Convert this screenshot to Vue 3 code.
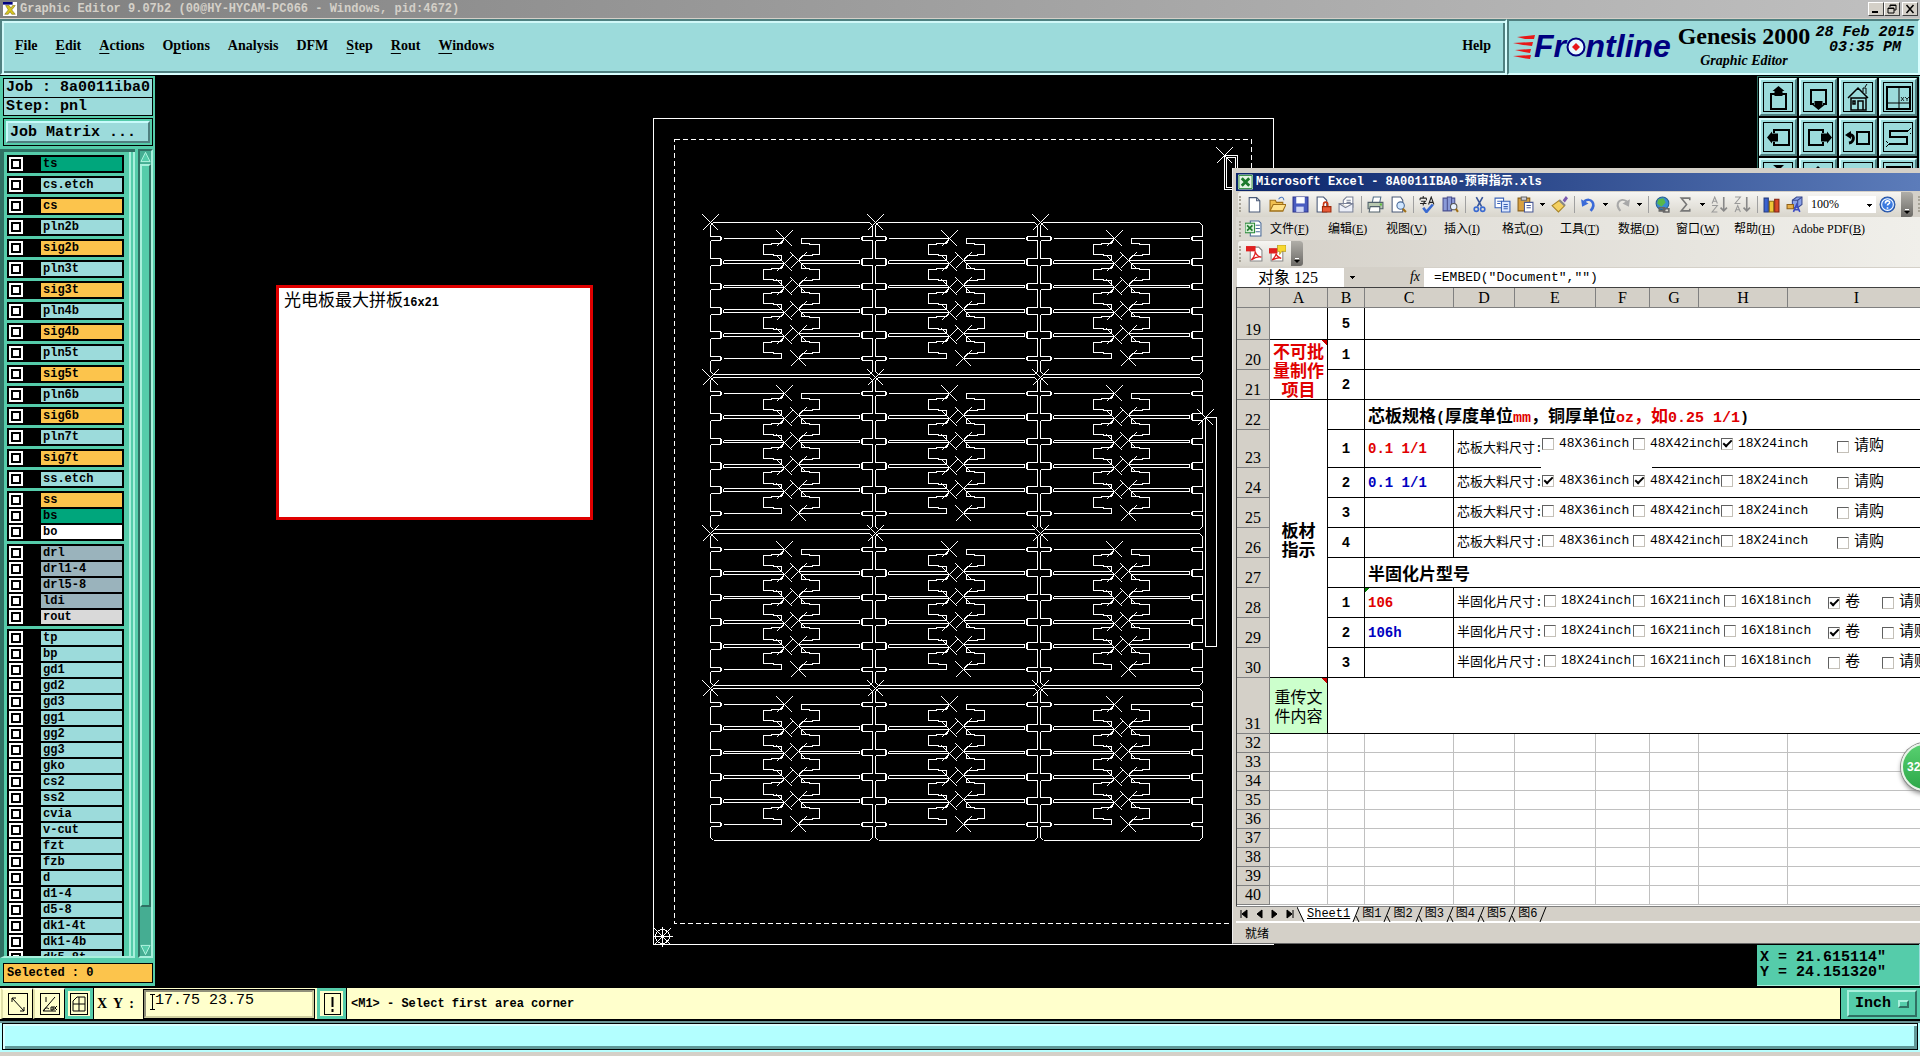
<script setup>
import { ref } from 'vue'

const menus = [
  ['', 'F', 'ile'], ['', 'E', 'dit'], ['', 'A', 'ctions'], ['O', 'p', 'tions'], ['Analysis', '', ''],
  ['DFM', '', ''], ['', 'S', 'tep'], ['', 'R', 'out'], ['', 'W', 'indows'],
]

const single = [
  ['ts', 'green'], ['cs.etch', 'aqua'], ['cs', 'gold'], ['pln2b', 'aqua'], ['sig2b', 'gold'], ['pln3t', 'aqua'],
  ['sig3t', 'gold'], ['pln4b', 'aqua'], ['sig4b', 'gold'], ['pln5t', 'aqua'], ['sig5t', 'gold'], ['pln6b', 'aqua'],
  ['sig6b', 'gold'], ['pln7t', 'aqua'], ['sig7t', 'gold'], ['ss.etch', 'aqua'],
]
const layerGroups = [
  ...single.map((l) => [l]),
  [['ss', 'gold'], ['bs', 'green'], ['bo', 'white']],
  [['drl', 'slate'], ['drl1-4', 'slate'], ['drl5-8', 'slate'], ['ldi', 'slate'], ['rout', 'silver']],
  ['tp', 'bp', 'gd1', 'gd2', 'gd3', 'gg1', 'gg2', 'gg3', 'gko', 'cs2', 'ss2', 'cvia', 'v-cut', 'fzt', 'fzb', 'd',
    'd1-4', 'd5-8', 'dk1-4t', 'dk1-4b', 'dk5-8t'].map((n) => [n, 'aqua']),
]

const toolButtons = [
  { name: 'Pan up', art: '<path d="M14 15H10V30H25V15H21" stroke-width="2"/><path fill="currentColor" stroke="none" d="M17.500 7l6 5h-2v5h-8v-5h-2z"/>' },
  { name: 'Pan down', art: '<path d="M13 25H10V11H25V25H22" stroke-width="2"/><path fill="currentColor" stroke="none" d="M17.500 31l6-5h-2v-4h-8v4h-2z"/>' },
  { name: 'Home', art: '<path d="M7 19L17 9l10 10M10 19h15v12H10zM17 31v-9h5v9M12 22h2v3h-2z" stroke-width="1.500"/><path d="M22 13V9h3v6M24 8l2-3"/>' },
  { name: 'Window XY', art: '<rect x="6" y="8" width="23" height="22" stroke-width="2"/><path d="M18 8v22M6 24h23"/><path d="M20 18l3 4M23 18l-3 4M24 18l2 2 2-2M26 20v2" stroke-width=".8"/>' },
  { name: 'Pan left', art: '<path d="M13 14v-3h15v15H13v-3" stroke-width="2"/><path fill="currentColor" stroke="none" d="M6 18.500l5-6v2h6v8h-6v2z"/>' },
  { name: 'Pan right', art: '<path d="M22 14v-3H8v15h14v-3" stroke-width="2"/><path fill="currentColor" stroke="none" d="M31 18.500l-5-6v2h-6v8h6v2z"/>' },
  { name: 'Previous', art: '<rect x="16" y="13" width="12" height="12" stroke-width="2"/><path d="M7 16c7-2 7 7 1 8" stroke-width="3"/><path fill="currentColor" stroke="none" d="M4 16l6-4v8z"/>' },
  { name: 'Snake', art: '<path d="M27 12H9v6h17v7H8" stroke-width="2"/><path d="M27 12l3-3M30 15l-1-1M8 25l-3 3M5 22l2 2"/>' },
  { name: 'Zoom in', art: '<path fill="currentColor" stroke="none" d="M12 6h11l-5 5z"/>' },
  { name: 'Zoom out', art: '<path fill="currentColor" stroke="none" d="M17 7l4 4h-8z"/>' },
  { name: 'Window', art: '' },
  { name: 'Frame', art: '<rect x="6" y="8" width="23" height="22" stroke-width="2"/>' },
]

// Panel drawing: one board outline, repeated on a 3 x 4 array
const notches = [[14, 18], [36, 43], [61, 67], [85, 92], [109, 116], [134, 138]]
const strips = [[16, 38, 22, 32], [41, 63, 47, 57], [65, 87, 71, 81], [90, 111, 95, 106], [114, 136, 120, 130]]
function side(x0, s) {
  const x = (n) => x0 + s * n
  let d = `M${x(3)} 0L${x(0)} 3`
  notches.forEach(([a, b]) => {
    d += `V${a}H${x(10)}V${b}H${x(0)}`
    d += `M${x(10)} ${a + 1}H${x(11)}V${b - 1}M${x(13)} ${a + 2}V${b - 2}M${x(0)} ${b}`
  })
  return d + `V149L${x(3)} 152`
}
let board = side(0, 1) + side(162, -1) + 'M3 0H159M3 152H159'
strips.forEach(([t, b, u, v]) => {
  board += `M13 ${t}H74L71 ${u - 1}L61 ${u - 1}V${u}H53V${v}H63V${v + 1}H71V${b}H13`
  board += `M149 ${t}H91V${u - 1}H99V${u}H109V${v}H102V${v + 1}H92L88 ${b}H149`
  board += `M66 ${t - 8}l16 16m0 -16l-16 16M80 ${b - 8}l16 16m0 -16l-16 16`
})
board += 'M-8 -8l16 16m0 -16l-16 16'
const origins = []
for (const y of [104, 259, 415, 570]) for (const x of [57, 222, 387]) origins.push([x, y])

const S = 'sep'
const D = 'drop'
const xlIcons = [
  ['New', '<path fill="#fff" stroke="#4a5a78" d="M3 1.500h7l3 3V15H3z"/><path fill="none" stroke="#4a5a78" d="M10 1.500v3h3"/>'],
  ['Open', '<path fill="#f0c050" stroke="#a07018" d="M1 4h5l1 2h6v8H1z"/><path fill="#ffe28a" stroke="#a07018" d="M1 14l3-6h12l-3 6z"/><path fill="none" stroke="#4a78c0" d="M9 3c2-3 5-2 5 1"/>'],
  ['Save', '<path fill="#4a5cc0" stroke="#28308a" d="M1 1h14v14H1z"/><path fill="#fff" d="M4 1h8v6H4z"/><path fill="#cfd6f4" d="M4 10h7v5H4z"/>'],
  ['Permission', '<path fill="#fff" stroke="#4a5a78" d="M2 1h6l3 3v11H2z"/><path fill="none" stroke="#c83818" stroke-width="1.500" d="M8 10V8c0-3 4-3 4 0v2"/><path fill="#e85a38" stroke="#a02808" d="M7 10h8v5H7z"/>'],
  ['Mail', '<path fill="#fff" stroke="#7a8298" d="M5 8V4l3-3h6v10"/><path fill="#eceff8" stroke="#7a8298" d="M1 7h13v8H1zM1 7l6 4 7-4"/><path stroke="#7a8298" d="M8 4h4M8 6h4"/>'],
  S,
  ['Print', '<path fill="#fff" stroke="#55708a" d="M5 6l1-5h7l-1 5"/><path fill="#b8c8b0" stroke="#50606a" d="M1 6h14v6H1z"/><path fill="#fff" stroke="#50606a" d="M3 10h9v5H2z"/><path fill="#5cba3c" d="M12 7h2v2h-2z"/>'],
  ['Preview', '<path fill="#fff" stroke="#4a5a78" d="M2 1h8l2 3v11H2z"/><circle cx="10" cy="9" r="3.500" fill="#cfe6ff" stroke="#4a6a98"/><path stroke="#a07018" stroke-width="2" d="M12 12l3 3"/>'],
  S,
  ['Spelling', '<path fill="none" stroke="#222" d="M1 2h6M4 0v2M1 2v2M7 2v2M2 5h4l-2 2v2M1 7h6M9 8l2.500-7L14 8M10 6h3"/><path fill="none" stroke="#3a6ad0" stroke-width="2.500" d="M4 11l3 4 6-7"/>'],
  ['Research', '<path fill="#8a9ad8" stroke="#4a5090" d="M1 2h4v12H1zM5 1h4v13H5zM9 2h3v10H9z"/><circle cx="11" cy="10" r="3" fill="#e6f0ff" stroke="#555"/><path stroke="#a07018" stroke-width="2" d="M13 12l2 3"/>'],
  S,
  ['Cut', '<path fill="none" stroke="#38569a" stroke-width="1.500" d="M5 1l5 9M11 1L6 10"/><circle cx="5" cy="12.500" r="2" fill="none" stroke="#3a6ad0" stroke-width="1.500"/><circle cx="11" cy="12.500" r="2" fill="none" stroke="#3a6ad0" stroke-width="1.500"/>'],
  ['Copy', '<path fill="#fff" stroke="#3a62b8" d="M1 2h8v9H1z"/><path fill="#dce8ff" stroke="#3a62b8" d="M7 5h8v10H7z"/><path stroke="#3a62b8" d="M3 5h4M3 7h3M9 8h4M9 10h4M9 12h4"/>'],
  ['Paste', '<path fill="#d8a040" stroke="#8a6018" d="M1 2h11v12H1z"/><path fill="#d0d0d8" stroke="#666" d="M4 1h5v3H4z"/><path fill="#fff" stroke="#4a5a98" d="M7 6h8v9H7z"/><path stroke="#4a5a98" d="M9 9h4M9 11h4"/>'],
  D,
  ['Format painter', '<path fill="#7a5ab0" d="M11 4l3-4 2 2-3 4z"/><path fill="#f4d060" stroke="#a88428" d="M1 9l7-5 5 5-6 6z"/><path stroke="#888" stroke-width="2" d="M8 4l5 5"/>'],
  S,
  ['Undo', '<path fill="none" stroke="#3a6ad8" stroke-width="2.500" d="M4 5c6-4 12 2 6 9"/><path fill="#3a6ad8" d="M1 3l1 7 6-3z"/>'],
  D,
  ['Redo', '<path fill="none" stroke="#a8a8a8" stroke-width="2" d="M12 5C6 1 0 7 6 14"/><path fill="#a8a8a8" d="M15 3l-1 7-6-3z"/>'],
  D,
  S,
  ['Hyperlink', '<circle cx="8" cy="7" r="6" fill="#3a8ad0" stroke="#286090"/><path fill="#58b84a" d="M4 3l5-1 2 4-4 4-4-3z"/><path fill="none" stroke="#666" stroke-width="1.500" d="M5 11h5v3H5zM9 12h5v3H9z"/>'],
  ['AutoSum', '<path fill="none" stroke="#777" stroke-width="1.500" d="M12 4V2H4l5 6-5 6h8v-2"/>'],
  D,
  ['Sort ascending', '<path fill="none" stroke="#999" d="M1 7l2.500-6L6 7M2 5h3M1 9h5l-5 6h5"/><path fill="none" stroke="#888" stroke-width="1.500" d="M12 1v13M9 11l3 3 3-3"/>'],
  ['Sort descending', '<path fill="none" stroke="#999" d="M1 1h5L1 7h5M1 15l2.500-6L6 15M2 13h3"/><path fill="none" stroke="#888" stroke-width="1.500" d="M12 1v13M9 11l3 3 3-3"/>'],
  S,
  ['Chart', '<path fill="#3a62d0" stroke="#223a80" d="M1 2h4v13H1z"/><path fill="#f0c838" stroke="#907010" d="M6 5h4v10H6z"/><path fill="#d84a28" stroke="#802010" d="M11 3h4v12h-4z"/>'],
  ['Drawing', '<path fill="#8aa2e8" stroke="#3a4a90" d="M6 4l4-3h5v7l-4 3H6z"/><path fill="none" stroke="#3a4a90" d="M6 4h5v7M11 4l4-3"/><path fill="#e8b04a" stroke="#906018" d="M1 8h6v4H1z"/><path fill="none" stroke="#3a4ac0" stroke-width="1.500" d="M7 15l3-7 3 7M8 13h4"/>'],
]

const xlMenus = [['文件', 'F'], ['编辑', 'E'], ['视图', 'V'], ['插入', 'I'], ['格式', 'O'], ['工具', 'T'], ['数据', 'D'], ['窗口', 'W'], ['帮助', 'H'], ['Adobe PDF', 'B']]
const columns = [['A', 58], ['B', 37], ['C', 89], ['D', 61], ['E', 81], ['F', 54], ['G', 49], ['H', 89], ['I', 138]]

const core = ['48X36inch', '48X42inch', '18X24inch', '请购']
const prepreg = ['18X24inch', '16X21inch', '16X18inch', '卷', '请购']
const coreRows = [
  { n: 23, i: 1, v: '0.1 1/1', c: 'red', on: [2] },
  { n: 24, i: 2, v: '0.1 1/1', c: 'blue', on: [0, 1] },
  { n: 25, i: 3, v: '', c: '', on: [] },
  { n: 26, i: 4, v: '', c: '', on: [] },
]
const prepregRows = [
  { n: 28, i: 1, v: '106', c: 'red', on: [3] },
  { n: 29, i: 2, v: '106h', c: 'blue', on: [3] },
  { n: 30, i: 3, v: '', c: '', on: [] },
]
const emptyRows = [32, 33, 34, 35, 36, 37, 38, 39, 40]
const sheets = ['图1', '图2', '图3', '图4', '图5', '图6']
const coords = ref('17.75 23.75')
</script>

<template>
  <div class="app">
    <header class="titlebar">
      <svg class="app-icon" viewBox="0 0 16 16"><rect width="16" height="16" fill="#fff" /><rect width="11" height="3" fill="#000080" /><path d="M3 4h4l2 3 2-3h3l-4 5 4 5h-4l-2-3-2 3H2l4-5z" fill="#d8c820" stroke="#705c10" stroke-width=".6" /></svg>
      <span class="title-text">Graphic Editor 9.07b2 (00@HY-HYCAM-PC066 - Windows, pid:4672)</span>
      <button class="win-btn" aria-label="Minimize"><svg viewBox="0 0 12 10"><path d="M2 8h6" stroke="#000" stroke-width="2" /></svg></button>
      <button class="win-btn" aria-label="Restore"><svg viewBox="0 0 12 10"><path d="M4 3V1h6v5H8M4 1.500h6M2 4h6v5H2zM2 4.500h6" fill="none" stroke="#000" /></svg></button>
      <button class="win-btn last" aria-label="Close"><svg viewBox="0 0 12 10"><path d="M2.500 1l7 8m0-8l-7 8" stroke="#000" stroke-width="1.500" /></svg></button>
    </header>

    <div class="top">
      <nav class="menubar">
        <button v-for="m in menus" :key="m.join('')">{{ m[0] }}<u>{{ m[1] }}</u>{{ m[2] }}</button>
        <button class="help">Help</button>
      </nav>
      <div class="brand">
        <div class="logo">
          <svg class="streaks" viewBox="0 0 22 24"><path fill="#e81818" d="M4 2l18-2-1 4H12zM0 8l20-1-1 4-9-1zM2 15l16-1-1 4-6-1zM0 21l18-1-1 4-7-1z" /></svg>
          <span class="wordmark">Fr<span class="ring">o<svg viewBox="0 0 20 20"><circle cx="10" cy="10" r="8.500" fill="#e8fbff" stroke="#000080" stroke-width="2" /><path d="M10 6l4 4-4 4-4-4z" fill="#e81818" /></svg></span>ntline</span>
        </div>
        <div class="product"><strong>Genesis 2000</strong><em>Graphic Editor</em></div>
        <div class="clock">28 Feb 2015<br>03:35 PM</div>
      </div>
    </div>

    <main class="work">
      <aside class="side">
        <div class="job"><div>Job : 8a0011iba0</div><div>Step: pnl</div></div>
        <div class="matrix"><button>Job Matrix ...</button></div>
        <div class="scroll">
          <div class="list">
            <div v-for="(g, gi) in layerGroups" :key="gi" class="group">
              <label v-for="l in g" :key="l[0]" class="layer"><input type="checkbox"><span :class="l[1]">{{ l[0] }}</span></label>
            </div>
          </div>
          <div class="bar">
            <svg viewBox="0 0 12 12"><path d="M6 1l5 10H1z" fill="#55ccaa" stroke="#b8f8e4" /></svg>
            <div class="thumb"></div>
            <svg viewBox="0 0 12 12"><path d="M1 1h10L6 11z" fill="#55ccaa" stroke="#b8f8e4" /></svg>
          </div>
        </div>
        <div class="selected">Selected : 0</div>
      </aside>

      <section class="canvas">
        <svg class="panel" width="630" height="840" viewBox="0 0 630 840" fill="none" stroke="#fff" shape-rendering="crispEdges">
          <g transform="translate(.5 .5)">
            <rect x="0" y="0" width="620" height="826" />
            <rect x="21" y="21" width="577" height="784" stroke-dasharray="5 3" />
            <path v-for="(o, i) in origins" :key="i" :d="board" :transform="`translate(${o[0]} ${o[1]})`" />
            <path d="M552 299h11v229h-11zM544 291l16 16m0-16l-16 16" />
            <path d="M571 37h13v34h-13zM573 39h9v30h-9zM563 29l16 16m0-16l-16 16" />
            <g><circle cx="9" cy="818" r="7" /><path d="M-1 818h20M9 808v20M1 810l16 16m0-16l-16 16" /><circle cx="9" cy="818" r="1" /></g>
          </g>
        </svg>
        <div class="note">光电板最大拼板<span>16x21</span></div>
      </section>

      <aside class="right">
        <div class="tools">
          <button v-for="t in toolButtons" :key="t.name" :aria-label="t.name"><svg viewBox="0 1 34 34" fill="none" stroke="currentColor"><rect x="2.500" y="3.500" width="29" height="29" /><g v-html="t.art" /></svg></button>
        </div>
        <div class="xy">X = 21.615114"<br>Y = 24.151320"</div>
      </aside>
    </main>

    <footer class="command">
      <button class="cmd" aria-label="Diagonal"><svg viewBox="0 0 22 24"><rect x="1.500" y="1.500" width="19" height="21" /><path d="M5 6l12 13M5 10V6h4M17 15v4h-4" /></svg></button>
      <button class="cmd" aria-label="Angle"><svg viewBox="0 0 22 24"><rect x="1.500" y="1.500" width="19" height="21" /><path d="M4 19L16 5M4 19h13M7 5v5M5 19c0-3 3-4 5-2M12 15h2v3h-2zM15 14v4m3-4l-2 2 2 2" /></svg></button>
      <button class="cmd on" aria-label="Grid"><svg viewBox="0 0 22 24"><rect x="2.500" y="1.500" width="17" height="21" /><path d="M5 9l4-4h8v14H5zM11 5v14M5 12h12" /></svg></button>
      <label class="xylabel" for="coords">X Y :</label>
      <div class="field"><svg viewBox="0 0 5 16"><path d="M0 .5h5M2.500 0v16M0 15.500h5" stroke="#000" /></svg><input id="coords" v-model="coords" type="text"></div>
      <button class="cmd on bang" aria-label="Alert"><svg viewBox="0 0 22 24"><rect x="3.500" y="1.500" width="16" height="21" /><path d="M11.500 5v10M11.500 17v3" stroke-width="2" /></svg></button>
      <span class="message">&lt;M1&gt; - Select first area corner</span>
      <div class="unit"><button>Inch<i></i></button></div>
    </footer>
    <div class="status"><div></div></div>

    <section class="excel">
      <div class="xl-title">
        <svg viewBox="0 0 16 16"><rect width="16" height="16" rx="1" fill="#e4f4e4" /><path d="M1 1h14v14H1z" fill="none" stroke="#2a8a3a" /><path d="M4 4l8 8m0-8l-8 8" stroke="#1c7a2c" stroke-width="3" /></svg>
        <span>Microsoft Excel - 8A0011IBA0-预审指示.xls</span>
      </div>
      <div class="xl-row">
        <div class="xl-bar main-bar">
          <span class="grip"></span>
          <template v-for="(ic, i) in xlIcons" :key="i">
            <span v-if="ic === 'sep'" class="sep"></span>
            <span v-else-if="ic === 'drop'" class="drop"></span>
            <button v-else class="xl-icon" :aria-label="ic[0]"><svg viewBox="0 0 16 16" v-html="ic[1]" /></button>
          </template>
          <select class="zoom" aria-label="Zoom"><option>100%</option></select>
          <button class="xl-icon" aria-label="Help"><svg viewBox="0 0 16 16"><circle cx="8" cy="8" r="7" fill="#3a7ae0" stroke="#2450a0" /><circle cx="8" cy="8" r="5.500" fill="none" stroke="#fff" /><path d="M6 7c0-3 4-3 4-1 0 1.500-2 1.500-2 3M8 10.500v1.500" fill="none" stroke="#fff" stroke-width="1.500" /></svg></button>
          <span class="cap"><i></i></span>
        </div>
        <span class="grip tail"></span>
      </div>
      <div class="xl-row menu-row">
        <span class="grip"></span>
        <svg class="book" viewBox="0 0 16 16"><path d="M5 1h8l2 2v12H5z" fill="#fff" stroke="#4a6a98" /><path d="M10 5h4M10 8h4M10 11h4" stroke="#4a6a98" /><rect y="3" width="9" height="9" fill="#d8f0d8" stroke="#2a8a3a" /><path d="M2 5l5 5m0-5l-5 5" stroke="#1c7a2c" stroke-width="1.500" /></svg>
        <button v-for="m in xlMenus" :key="m[1]">{{ m[0] }}(<u>{{ m[1] }}</u>)</button>
      </div>
      <div class="xl-row pdf-row">
        <div class="xl-bar">
          <span class="grip"></span>
          <button class="xl-icon" aria-label="Convert to PDF"><svg viewBox="0 0 16 16"><path d="M4 2h8l3 3v10H4z" fill="#fff" stroke="#888" /><rect width="9" height="5" y="1" fill="#e02020" /><path d="M5 14c2-2 4-5 3.500-8 1 4 3 5 6 5.500-3-1-6 0-9.500 2.500z" fill="none" stroke="#e02020" stroke-width="1.200" /></svg></button>
          <button class="xl-icon" aria-label="Convert and review"><svg viewBox="0 0 16 16"><path d="M2 4h9l2 2v9H2z" fill="#fff" stroke="#888" /><rect width="8" height="5" y="3" fill="#e02020" /><path d="M8 0h8v6h-4l-2 3V6H8z" fill="#f8d830" stroke="#a08818" stroke-width=".6" /><path d="M3 14c2-2 4-4 3.500-6 1 3 3 4 5 4.500-3-1-5 0-8.500 1.500z" fill="none" stroke="#e02020" stroke-width="1.200" /></svg></button>
          <span class="cap"><i></i></span>
        </div>
      </div>
      <div class="formula">
        <span class="name">对象 125</span><span class="drop"></span><em>fx</em><span class="expr">=EMBED("Document","")</span>
      </div>

      <div class="sheet">
        <table>
          <colgroup><col class="rowcol"><col v-for="c in columns" :key="c[0]" :style="{ width: c[1] + 'px' }"></colgroup>
          <thead><tr><th></th><th v-for="c in columns" :key="c[0]">{{ c[0] }}</th></tr></thead>
          <tbody>
            <tr class="r19"><th>19</th><td></td><td class="num">5</td><td colspan="7"></td></tr>
            <tr class="std"><th>20</th><td rowspan="2" class="cat red mark">不可批<br>量制作<br>项目</td><td class="num">1</td><td colspan="7"></td></tr>
            <tr class="std"><th>21</th><td class="num">2</td><td colspan="7"></td></tr>
            <tr class="std"><th>22</th><td rowspan="9" class="cat">板材<br>指示</td><td></td><td colspan="7" class="head">芯板规格<b>(</b>厚度单位<b class="red">mm</b>，铜厚单位<b class="red">oz</b><span class="red">，如<b>0.25 1/1</b></span><b>)</b></td></tr>
            <tr v-for="r in coreRows" :key="r.n" :class="r.n === 23 ? 'tall' : 'std'">
              <th>{{ r.n }}</th><td class="num">{{ r.i }}</td><td class="val" :class="r.c">{{ r.v }}</td>
              <td colspan="6" class="opts">
                <span v-if="r.n === 24" class="cover"></span>
                <div class="core"><span>芯板大料尺寸:</span><label v-for="(o, i) in core" :key="o"><input type="checkbox" :checked="r.on.includes(i)">{{ o }}</label></div>
              </td>
            </tr>
            <tr class="std"><th>27</th><td></td><td colspan="7" class="head">半固化片型号</td></tr>
            <tr v-for="r in prepregRows" :key="r.n" class="std">
              <th>{{ r.n }}</th><td class="num">{{ r.i }}</td><td class="val" :class="[r.c, { tick: r.n === 28 }]">{{ r.v }}</td>
              <td colspan="6" class="opts">
                <div class="prepreg"><span>半固化片尺寸:</span><label v-for="(o, i) in prepreg" :key="o"><input type="checkbox" :checked="r.on.includes(i)">{{ o }}</label></div>
              </td>
            </tr>
            <tr class="r31"><th>31</th><td class="mark resend">重传文<br>件内容</td><td colspan="8"></td></tr>
            <tr v-for="n in emptyRows" :key="n" class="blank"><th>{{ n }}</th><td v-for="c in columns" :key="c[0]"></td></tr>
          </tbody>
        </table>
      </div>
      <div class="tabs">
        <svg class="nav" viewBox="0 0 60 14"><path d="M4 3v8M10 3v8l-5-4zM25 3v8l-5-4zM35 3v8l5-4zM50 3v8l5-4zM56 3v8" stroke="#000" stroke-width="1" /></svg>
        <svg class="slash first" viewBox="0 0 8 15"><path d="M0 0h8v15z" fill="#fff" /><path d="M0 0l7 15" stroke="#000" /></svg>
        <button class="active">Sheet1</button>
        <svg class="slash" viewBox="0 0 8 15"><path d="M0 0h7L1 15H0z" fill="#fff" /><path d="M7 0L1 15M4 9l3 6" stroke="#000" fill="none" /></svg>
        <template v-for="s in sheets" :key="s">
          <button>{{ s }}</button>
          <svg class="slash" viewBox="0 0 8 15"><path :d="s === '图6' ? 'M7 0L1 15' : 'M7 0L1 15M4 9l3 6'" stroke="#000" fill="none" /></svg>
        </template>
      </div>
      <div class="ready">就绪</div>
      <div class="badge">32</div>
    </section>
  </div>
</template>

<style>
body { margin: 0; background: #000; }
</style>

<style scoped>
* { box-sizing: border-box; }
.app { position: relative; display: flex; flex-direction: column; height: 100vh; overflow: hidden; background: #000; color: #000; font-family: "Liberation Mono", "Noto Sans CJK SC", monospace; }
button { font: inherit; color: inherit; background: none; border: 0; padding: 0; margin: 0; white-space: nowrap; }
svg { display: block; flex: none; }

.titlebar { display: flex; align-items: center; flex: none; height: 19px; padding: 0 2px; background: linear-gradient(90deg, #808080, #c0c0c0); border-bottom: 1px solid #d4d0c8; }
.app-icon { width: 16px; height: 14px; }
.title-text { flex: 1; padding-left: 2px; font-size: 12px; font-weight: bold; line-height: 16px; color: #d4d0c8; }
.win-btn { width: 16px; height: 14px; background: #d4d0c8; border: 1px solid; border-color: #fff #404040 #404040 #fff; }
.win-btn svg { width: 12px; height: 10px; margin: 0 auto; }
.win-btn.last { margin-left: 2px; }

.top { display: flex; flex: none; height: 56px; background: #9cdbdb; font-family: "Liberation Serif", serif; }
.menubar { display: flex; flex: 1; align-items: center; gap: 18px; padding: 0 14px 2px 13px; border: 2px solid; border-color: #4f8080 #d8ffff #d8ffff #4f8080; box-shadow: inset 2px 2px #d0f8f8, inset -2px -2px #4f8080; font-size: 14px; font-weight: bold; }
.menubar u { text-underline-offset: 3px; }
.help { margin-left: auto; }
.brand { display: flex; width: 413px; padding-left: 4px; border: 2px solid; border-color: #4f8080 #d8ffff #d8ffff #4f8080; }
.logo { display: flex; width: 163px; padding-top: 8px; }
.streaks { width: 22px; height: 24px; margin-top: 6px; }
.wordmark { margin-left: -1px; font: italic bold 32px/34px "Liberation Sans", sans-serif; color: #000080; }
.ring { position: relative; color: transparent; }
.ring svg { position: absolute; left: 0; top: 9px; width: 20px; height: 20px; }
.product { display: flex; flex-direction: column; align-items: center; width: 136px; white-space: nowrap; }
.product strong { font-size: 24px; line-height: 31px; }
.product em { font-size: 14px; font-weight: bold; line-height: 18px; }
.clock { flex: 1; padding-top: 4px; font: italic bold 15px/15px "Liberation Mono", monospace; text-align: center; white-space: nowrap; }

.work { display: flex; flex: 1; min-height: 0; padding-top: 1px; border-bottom: 1px solid #000; }
.side { display: flex; flex-direction: column; width: 155px; padding: 2px 2px 3px 3px; background: #55ccaa; }
.job { border: 1px solid #000; background: #9cdbdb; font-size: 15px; font-weight: bold; }
.job div { height: 18px; padding-left: 2px; line-height: 17px; white-space: nowrap; }
.job div + div { border-top: 1px solid #000; }
.matrix { height: 28px; margin-top: 2px; padding: 2px; border: 1px solid #000; font-size: 15px; }
.matrix button { width: 100%; height: 22px; padding-left: 2px; text-align: left; font-weight: bold; background: #9cdbdb; border: 2px solid; border-color: #c8fbfb #4f8080 #4f8080 #c8fbfb; }
.scroll { display: flex; justify-content: space-between; flex: 1; min-height: 0; margin: 3px 0 5px -3px; }
.list { display: flex; flex-direction: column; gap: 3px; width: 135px; padding: 3px 8px 0 4px; overflow: hidden; border-top: 3px solid #2f7063; border-left: 4px solid #2f7063; border-bottom: 2px solid #a8f0dc; box-shadow: inset -2px 0 #a8f0dc, inset -4px 0 #55ccaa, inset -6px 0 #a8f0dc; }
.group { display: flex; flex: none; flex-direction: column; gap: 2px; width: 117px; margin-left: -1px; padding: 2px; background: #000; }
.layer { display: flex; justify-content: space-between; height: 14px; }
.layer input { appearance: none; width: 14px; height: 14px; margin: 0; border: 2px solid #fff; background: #fff; box-shadow: inset 0 0 0 2px #000; }
.layer span { width: 81px; padding-left: 2px; font-size: 12px; font-weight: bold; line-height: 14px; }
.green { background: #00a67c; }
.aqua { background: #9cdbdb; }
.gold { background: #fcc44c; }
.white { background: #fff; }
.slate { background: #9ab3bc; }
.silver { background: #d9d9d9; }
.bar { display: flex; flex-direction: column; width: 15px; background: #45ad92; border: 2px solid; border-color: #2f7063 #a8f0dc #a8f0dc #2f7063; }
.bar svg { width: 11px; height: 12px; }
.thumb { flex: 1; margin: 1px 0 37px; background: #55ccaa; border: 2px solid; border-color: #a8f0dc #2f7063 #2f7063 #a8f0dc; }
.selected { height: 20px; padding-left: 3px; border: 1px solid #000; background: #fcc44c; font-size: 12px; font-weight: bold; line-height: 18px; }

.canvas { position: relative; flex: 1; overflow: hidden; }
.panel { position: absolute; left: 498px; top: 42px; overflow: visible; }
.note { position: absolute; left: 121px; top: 209px; width: 317px; height: 235px; padding: 0 5px; border: 3px solid #e00000; background: #fff; font: 17px/22px "Noto Sans CJK SC", sans-serif; }
.note span { font: bold 12px "Liberation Mono", monospace; }

.right { display: flex; flex-direction: column; justify-content: space-between; width: 163px; background: #000; border-right: 1px solid #9cdbdb; }
.tools { display: grid; grid-template-columns: repeat(4, 38px); gap: 2px; padding: 1px; border-left: 1px solid #2f7063; border-top: 1px solid #2f7063; }
.tools button { height: 38px; background: #9cdbdb; border: 2px solid; border-color: #d8ffff #4f8080 #4f8080 #d8ffff; }
.tools svg { width: 34px; height: 34px; }
.xy { height: 41px; padding: 5px 3px; background: #55ccaa; border-bottom: 1px solid #a8f0dc; font-size: 15px; font-weight: bold; line-height: 15px; white-space: nowrap; }

.command { display: flex; align-items: center; flex: none; height: 34px; padding-left: 1px; background: #ffffcc; border-top: 1px solid #000; border-bottom: 2px solid #000; }
.cmd { width: 32px; height: 31px; background: #ffffcc; border: 3px solid; border-color: #ffffe8 #000 #000 #e0e0a8; border-width: 2px 1px 1px 2px; }
.cmd svg { width: 22px; height: 24px; margin: 0 auto; fill: none; stroke: #000; }
.cmd.on { width: 28px; border: 3px solid #55ccaa; box-shadow: 1px 0 #000; }
.xylabel { width: 51px; padding-left: 4px; font: bold 14px "Liberation Serif", serif; word-spacing: 3px; white-space: pre; }
.field { display: flex; width: 170px; height: 28px; padding: 2px 4px; border: 2px solid; border-color: #90907a #d0d0a0 #d0d0a0 #90907a; outline: 1px solid #000; }
.field svg { width: 5px; height: 16px; }
.field input { flex: 1; min-width: 0; height: 14px; padding: 0; border: 0; background: none; font: 15px/14px "Liberation Mono", monospace; color: #000; }
.cmd.bang { width: 29px; margin-left: 3px; }
.message { flex: 1; padding-left: 5px; font-size: 12px; font-weight: bold; }
.unit { width: 80px; height: 31px; padding: 2px 3px 2px 6px; background: #55ccaa; border-left: 1px solid #000; }
.unit button { display: flex; align-items: center; justify-content: space-between; width: 100%; height: 27px; padding: 0 6px; border: 2px solid; border-color: #a8f0dc #2f7063 #2f7063 #a8f0dc; font-size: 15px; font-weight: bold; }
.unit i { width: 11px; height: 8px; border: 2px solid; border-color: #a8f0dc #2f7063 #2f7063 #a8f0dc; }
.status { flex: none; height: 35px; padding: 2px 2px 6px; background: linear-gradient(#6a9494 2px, #b8ffff 2px, #b8ffff 31px, #d4d0c8 31px); }
.status div { height: 27px; border: 1px solid #000; background: #b3ffff; box-shadow: inset 2px 2px #d8ffff, inset -3px -3px #609898; }

.excel { position: absolute; left: 1232px; right: 0; top: 168px; display: flex; flex-direction: column; height: 776px; padding: 5px 0 0 3px; overflow: hidden; background: #d4d0c8; border-left: 1px solid #eee; border-bottom: 1px solid #666; font-family: "Liberation Serif", "Noto Sans CJK SC", serif; }
.xl-title { display: flex; align-items: center; flex: none; height: 18px; background: linear-gradient(90deg, #0a246a, #5c7cba); color: #fff; font: bold 12px "Liberation Mono", "Noto Sans CJK SC", monospace; }
.xl-title svg { width: 15px; height: 16px; margin: 0 3px 0 2px; }
.xl-title span { line-height: 18px; white-space: nowrap; }
.xl-row { display: flex; align-items: center; flex: none; height: 26px; padding-left: 2px; }
.xl-bar { display: flex; align-items: center; height: 25px; background: linear-gradient(#f6f5f2, #d8d5cc); border-radius: 3px; }
.grip { width: 4px; height: 16px; margin-left: 1px; border-left: 2px dotted #a8a498; }
.xl-icon { display: flex; justify-content: center; width: 23px; }
.xl-icon svg { width: 17px; height: 17px; }
.sep { width: 6px; height: 17px; background: linear-gradient(#a0a0a0, #a0a0a0) 3px 0 / 1px 100% no-repeat; }
.drop { width: 11px; height: 3px; background: linear-gradient(#000, #000) 3px 0 / 5px 1px no-repeat, linear-gradient(#000, #000) 4px 1px / 3px 1px no-repeat, linear-gradient(#000, #000) 5px 2px / 1px 1px no-repeat; }
.zoom { appearance: none; width: 68px; height: 17px; margin-left: 2px; padding: 0 3px; border: 0; border-radius: 0; color: #000; font: 12px/15px "Liberation Serif", serif; background: linear-gradient(#000, #000) 59px 8px / 5px 1px no-repeat, linear-gradient(#000, #000) 60px 9px / 3px 1px no-repeat, linear-gradient(#000, #000) 61px 10px / 1px 1px no-repeat, #fff; }
.cap { display: flex; align-items: flex-end; justify-content: center; width: 12px; height: 25px; margin-left: 2px; padding-bottom: 3px; border-radius: 0 3px 3px 0; background: linear-gradient(#b0aea8, #6c6a66); }
.cap i { border: 3px solid transparent; border-top-color: #000; border-bottom: 0; box-shadow: 0 -3px 0 -1px #fff; }
.grip.tail { margin-left: 5px; }
.menu-row { height: 23px; background: linear-gradient(90deg, #dcd9d2, #f0efea); font-size: 12px; }
.book { width: 17px; height: 17px; margin: 0 8px 0 2px; }
.menu-row button { width: 58px; text-align: left; line-height: 18px; }
.menu-row button:nth-of-type(10) { width: auto; }
.pdf-row { height: 27px; background: linear-gradient(90deg, #d4d0c8, #f0efea); }
.formula { display: flex; align-items: center; flex: none; height: 20px; font-size: 16px; }
.name { width: 107px; height: 19px; padding-left: 21px; background: #fff; line-height: 19px; margin-left: 1px; }
.formula .drop { margin-left: 3px; }
.formula em { width: 66px; padding-right: 4px; text-align: right; font-size: 14px; }
.expr { flex: 1; height: 19px; padding-left: 10px; background: #fff; font: 13px/19px "Liberation Mono", monospace; }

.sheet { flex: none; height: 619px; overflow: hidden; border-top: 1px solid #404040; border-left: 1px solid #404040; background: #fff; }
table { table-layout: fixed; width: 689px; border-spacing: 0; }
.rowcol { width: 33px; }
th, td { padding: 0; border-right: 1px solid #000; border-bottom: 1px solid #000; background: #fff; }
th { height: 19px; font-weight: normal; font-size: 16px; line-height: 18px; background: #d4d0c8; border-color: #808080; vertical-align: bottom; }
thead th { height: 20px; vertical-align: middle; line-height: 17px; }
tr.r19 { height: 32px; }
tr.std { height: 30px; }
tr.tall { height: 38px; }
tr.r31 { height: 56px; }
tr.blank { height: 19px; }
.blank td { border-color: #c0c0c0; }
.num, .val { font: bold 14px/16px "Liberation Mono", monospace; text-align: center; }
.val { padding-left: 3px; text-align: left; }
.head { padding-left: 3px; font: bold 17px/24px "Noto Sans CJK SC", sans-serif; white-space: nowrap; }
.head b { font: bold 15px "Liberation Mono", monospace; }
.cat { font: bold 17px/19px "Noto Sans CJK SC", sans-serif; text-align: center; }
.resend { background: #ccffcc; font: 16px/19px "Noto Sans CJK SC", sans-serif; text-align: center; }
.mark { background-image: linear-gradient(225deg, #c00 4px, transparent 4px); }
.tick { background-image: linear-gradient(135deg, #008000 3px, transparent 3px); }
.red { color: #e00000; }
.blue { color: #0000c0; }
.opts { position: relative; font: 13px/16px "Liberation Mono", "Noto Sans CJK SC", monospace; white-space: nowrap; }
.core, .prepreg { display: grid; align-items: center; width: 0; }
.core { grid-template-columns: 88px 91px 88px 116px 80px; }
.prepreg { grid-template-columns: 90px 89px 91px 104px 54px 60px; }
.opts div span { padding-left: 3px; }
.opts label { display: flex; align-items: center; gap: 5px; padding-bottom: 4px; }
.tall .opts label { padding-bottom: 10px; }
.core label:last-child, .prepreg label:nth-last-child(-n+2) { padding-bottom: 0; font-size: 15px; }
.tall .core label:last-child { padding-bottom: 4px; }
.opts input { appearance: none; display: grid; flex: none; place-items: center; width: 12px; height: 12px; margin: 0; background: #fff; border: 1px solid; border-color: #606060 #c4c0b8 #c4c0b8 #606060; }
.opts input:checked::after { content: ""; width: 7px; height: 3px; margin-bottom: 2px; border-left: 2px solid #000; border-bottom: 2px solid #000; transform: rotate(-45deg); }
.opts .cover { position: absolute; left: 87px; top: -2px; width: 111px; height: 4px; padding: 0; background: #fff; }

.tabs { display: flex; flex: none; height: 17px; padding-left: 1px; border-bottom: 2px solid #fff; border-top: 1px solid #808080; font: 12px/14px "Liberation Mono", "Noto Sans CJK SC", monospace; }
.nav { width: 60px; height: 14px; }
.slash { width: 8px; height: 15px; }
.tabs button { height: 14px; padding: 0 2px; }
.tabs .active { background: #fff; text-decoration: underline; }
.ready { padding-left: 9px; font: 12px/20px "Noto Sans CJK SC", sans-serif; }
.badge { position: absolute; right: -29px; top: 575px; width: 48px; height: 48px; padding-left: 4px; border: 2px solid #e8f4e8; border-radius: 50%; background: linear-gradient(#58d070, #2ca848); box-shadow: 0 0 0 1px #888, 0 3px 5px #888; color: #fff; font: bold 12px/44px "Liberation Sans", sans-serif; }
</style>
